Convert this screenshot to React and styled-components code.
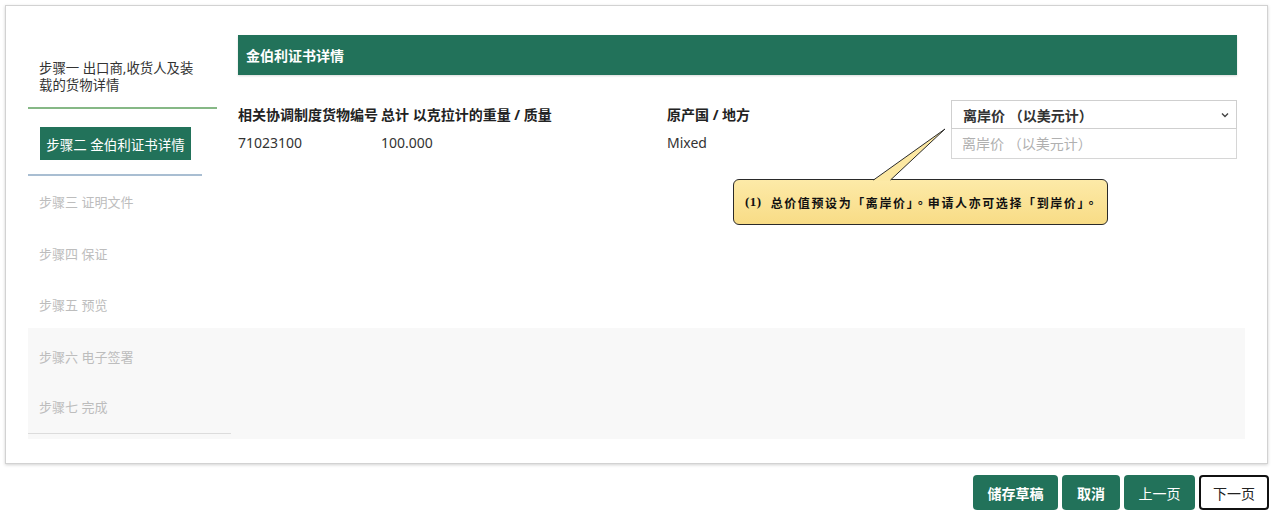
import React from 'react'
import styled, { createGlobalStyle } from 'styled-components'

const GlobalStyle = createGlobalStyle`
  body {
    margin: 0;
    background: #fff;
    font-family: "Noto Sans", "Noto Sans CJK SC", sans-serif;
    color: #333;
  }
`

const GREEN = '#22725a'

const steps = [
    { label: '步骤三 证明文件' },
    { label: '步骤四 保证' },
    { label: '步骤五 预览' },
    { label: '步骤六 电子签署' },
    { label: '步骤七 完成', last: true },
]

const App = () => {
    return (
        <>
            <GlobalStyle />
            <Card>
                <Body>
                    <Sidebar>
                        <StepDone>
                            <span>步骤一 出口商,收货人及装载的货物详情</span>
                        </StepDone>
                        <StepCurrent>
                            <CurrentTag>步骤二 金伯利证书详情</CurrentTag>
                        </StepCurrent>
                        {steps.map((s) => (
                            <StepPending key={s.label} $last={s.last}>{s.label}</StepPending>
                        ))}
                    </Sidebar>
                    <Main>
                        <SectionBar>金伯利证书详情</SectionBar>
                        <Fields>
                            <Field>
                                <FieldLabel>相关协调制度货物编号</FieldLabel>
                                <FieldValue>71023100</FieldValue>
                            </Field>
                            <Field>
                                <FieldLabel>总计 以克拉计的重量 / 质量</FieldLabel>
                                <FieldValue>100.000</FieldValue>
                            </Field>
                            <Field>
                                <FieldLabel>原产国 / 地方</FieldLabel>
                                <FieldValue>Mixed</FieldValue>
                            </Field>
                            <PriceField>
                                <SelectBox>
                                    <span>离岸价 （以美元计）</span>
                                    <svg width="10" height="10" viewBox="0 0 10 10">
                                        <path d="M2 3.5 L5 6.5 L8 3.5" fill="none" stroke="#444" strokeWidth="1.4" />
                                    </svg>
                                </SelectBox>
                                <PriceInput placeholder="离岸价 （以美元计）" />
                            </PriceField>
                        </Fields>
                        <Callout lang="zh-Hant">
                            <Pointer width="76" height="53" viewBox="0 0 76 53">
                                <polygon points="0,52.5 72,1 17,52.5" fill="#fce8a2" />
                                <polyline points="0.5,52 72,1 17.5,52" fill="none" stroke="#2a2a2a" strokeWidth="1" />
                            </Pointer>
                            <Num>(1)</Num>总价值预设为「离岸价」。申请人亦可选择「到岸价」。
                        </Callout>
                    </Main>
                </Body>
            </Card>
            <Actions>
                <Button $w={85}>储存草稿</Button>
                <Button $w={58}>取消</Button>
                <Button $w={71} $light>上一页</Button>
                <Button $w={70} $outline>下一页</Button>
            </Actions>
        </>
    )
}

export default App

const Card = styled.div`
    margin: 5px 7px 0 5px;
    height: 459px;
    border: 1px solid #d2d2d2;
    box-shadow: 0 1px 3px rgba(0, 0, 0, 0.18);
    padding: 29px 22px 0 22px;
    box-sizing: border-box;
`

const Body = styled.div`
    display: flex;
    height: 404px;
    padding-right: 8px;
    background: linear-gradient(#fff 293px, #f8f8f8 293px);
`

const Sidebar = styled.div`
    width: 203px;
    flex-shrink: 0;
    display: flex;
    flex-direction: column;
    align-items: flex-start;
    font-size: 13px;
`

const StepDone = styled.div`
    width: 189px;
    box-sizing: border-box;
    padding: 25px 0 13px 11px;
    border-bottom: 2px solid #86b886;
    color: #333;
    line-height: 17px;

    & span {
        display: block;
        width: 158px;
        font-size: 13.4px;
    }
`

const StepCurrent = styled.div`
    width: 174px;
    box-sizing: border-box;
    padding: 18px 0 14px 12px;
    border-bottom: 2px solid #a9bed2;
`

const CurrentTag = styled.div`
    width: 151px;
    height: 33px;
    display: flex;
    align-items: center;
    justify-content: center;
    background: ${GREEN};
    color: #fff;
    font-size: 13.5px;
`

const StepPending = styled.div`
    width: 203px;
    height: 51.5px;
    box-sizing: border-box;
    display: flex;
    align-items: center;
    padding: 0 0 ${(p) => (p.$last ? '1px' : '0')} 11px;
    color: #bdbdbd;
    border-bottom: ${(p) => (p.$last ? '1px solid #dcdcdc' : 'none')};
`

const Main = styled.div`
    flex: 1;
    margin-left: 7px;
    position: relative;
`

const SectionBar = styled.div`
    height: 40px;
    display: flex;
    align-items: center;
    padding-left: 8px;
    background: ${GREEN};
    color: #fff;
    font-size: 14px;
    font-weight: bold;
    box-shadow: 0 1px 2px rgba(0, 0, 0, 0.15);
`

const Fields = styled.div`
    display: grid;
    grid-template-columns: 143px 286px 284px 286px;
    margin-top: 25px;
`

const Field = styled.div`
    display: flex;
    flex-direction: column;
    padding-top: 5px;
    font-size: 14px;
`

const FieldLabel = styled.div`
    font-weight: bold;
    color: #222;
    line-height: 20px;
    white-space: nowrap;
`

const FieldValue = styled.div`
    margin-top: 8px;
    line-height: 20px;
    color: #333;
`

const PriceField = styled.div`
    display: flex;
    flex-direction: column;
`

const SelectBox = styled.div`
    height: 29px;
    box-sizing: border-box;
    border: 1px solid #cfcfcf;
    display: flex;
    align-items: center;
    justify-content: space-between;
    padding: 0 6px 0 11px;
    font-size: 14px;
    font-weight: bold;
    color: #333;
`

const PriceInput = styled.input`
    height: 30px;
    box-sizing: border-box;
    border: 1px solid #d6d6d6;
    border-top: none;
    padding: 0 10px;
    font-family: inherit;
    font-size: 14px;
    outline: none;

    &::placeholder {
        color: #b0b0b0;
    }
`

const Callout = styled.div`
    position: absolute;
    left: 495px;
    top: 144px;
    width: 375px;
    height: 46px;
    box-sizing: border-box;
    display: flex;
    align-items: center;
    padding-left: 11px;
    border: 1px solid #2a2a2a;
    border-radius: 6px;
    background: linear-gradient(#fdeaa8, #f8dc86);
    font-family: "Noto Sans CJK TC", sans-serif;
    font-size: 12px;
    font-weight: bold;
    letter-spacing: 1.6px;
    color: #111;
`

const Pointer = styled.svg`
    position: absolute;
    left: 139px;
    top: -52px;
`

const Num = styled.span`
    font-family: "Liberation Serif", serif;
    font-size: 13px;
    margin-right: 9px;
    letter-spacing: 0.5px;
`

const Actions = styled.div`
    display: flex;
    justify-content: flex-end;
    gap: 4px;
    margin: 11px 6px 0 0;
`

const Button = styled.button`
    width: ${(p) => p.$w}px;
    height: 35px;
    border-radius: 4px;
    border: ${(p) => (p.$outline ? '2px solid #111' : 'none')};
    background: ${(p) => (p.$outline ? '#fff' : GREEN)};
    color: ${(p) => (p.$outline ? '#222' : '#fff')};
    font-family: "Noto Sans CJK SC", sans-serif;
    font-size: 14px;
    font-weight: ${(p) => (p.$outline || p.$light ? 'normal' : 'bold')};
    padding: 0;
`
